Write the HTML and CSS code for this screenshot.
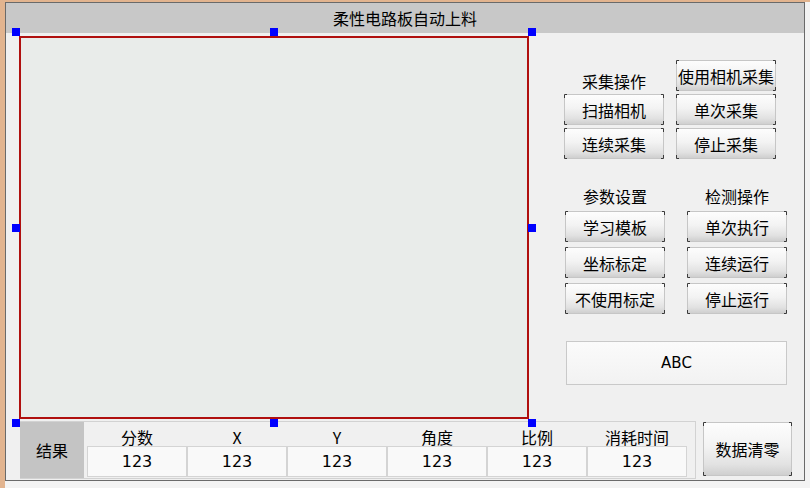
FILE: index.html
```html
<!DOCTYPE html>
<html lang="zh">
<head>
<meta charset="UTF-8">
<title>柔性电路板自动上料</title>
<link rel="stylesheet" href="styles.css">
</head>
<body>

<div class="screen">
<div class="window">

    <div class="titlebar">柔性电路板自动上料</div>

    <div class="workarea">
        <div class="viewport">
            <span class="handle h-tl"></span>
            <span class="handle h-tm"></span>
            <span class="handle h-tr"></span>
            <span class="handle h-ml"></span>
            <span class="handle h-mr"></span>
            <span class="handle h-bl"></span>
            <span class="handle h-bm"></span>
            <span class="handle h-br"></span>
        </div>

        <div class="panel">
            <div class="group group-acq">
                <div class="label">采集操作</div>
                <button class="btn">使用相机采集</button>
                <button class="btn">扫描相机</button>
                <button class="btn">单次采集</button>
                <button class="btn">连续采集</button>
                <button class="btn">停止采集</button>
            </div>

            <div class="group group-det">
                <div class="label">参数设置</div>
                <div class="label">检测操作</div>
                <button class="btn">学习模板</button>
                <button class="btn">单次执行</button>
                <button class="btn">坐标标定</button>
                <button class="btn">连续运行</button>
                <button class="btn">不使用标定</button>
                <button class="btn">停止运行</button>
            </div>

            <div class="readout">ABC</div>
        </div>
    </div>

    <div class="bottombar">
        <div class="results">
            <div class="results-title">结果</div>
            <div class="results-grid">
                <div class="col"><div class="col-name">分数</div><div class="col-value">123</div></div>
                <div class="col"><div class="col-name">X</div><div class="col-value">123</div></div>
                <div class="col"><div class="col-name">Y</div><div class="col-value">123</div></div>
                <div class="col"><div class="col-name">角度</div><div class="col-value">123</div></div>
                <div class="col"><div class="col-name">比例</div><div class="col-value">123</div></div>
                <div class="col"><div class="col-name">消耗时间</div><div class="col-value">123</div></div>
            </div>
        </div>
        <button class="btn btn-clear">数据清零</button>
    </div>

</div>
</div>

</body>
</html>
```

FILE: styles.css
```css
body{
    margin:0;
    background:#f3f3f3;
    font-family:"Noto Sans CJK SC", "DejaVu Sans", sans-serif;
    color:#000;
}

.screen{
    border-top:2px solid #e2b48f;
    border-left:5px solid #e2b48f;
    height:486px;
}

.window{
    width:798px;
    height:477px;
    border:1px solid #6a6a6a;
    background:#f0f0f0;
    display:flex;
    flex-direction:column;
}

.titlebar{
    height:30px;
    line-height:30px;
    background:#c8c8c8;
    text-align:center;
    font-size:16px;
}

.workarea{
    height:388px;
    display:flex;
}

/* image view with selection handles */
.viewport{
    position:relative;
    box-sizing:border-box;
    width:510px;
    height:383px;
    margin:3px 0 0 13px;
    border:2px solid #b0100f;
    background:#e9ecea;
}

.handle{
    position:absolute;
    width:8px;
    height:8px;
    background:#0000ff;
}
.h-tl{ left:-9px; top:-10px; }
.h-tm{ left:calc(50% - 4px); top:-10px; }
.h-tr{ right:-9px; top:-10px; }
.h-ml{ left:-9px; top:calc(50% - 4px); }
.h-mr{ right:-9px; top:calc(50% - 4px); }
.h-bl{ left:-9px; bottom:-10px; }
.h-bm{ left:calc(50% - 4px); bottom:-10px; }
.h-br{ right:-9px; bottom:-10px; }

.panel{
    margin-left:35px;
    padding-top:27px;
    display:flex;
    flex-direction:column;
}

.group{
    display:grid;
    grid-template-columns:100px 100px;
}

.group-acq{
    column-gap:12px;
    row-gap:3px;
    grid-auto-rows:31px;
}

.group-det{
    margin:28px 0 0 1px;
    column-gap:22px;
    row-gap:5px;
    grid-template-rows:19px;
    grid-auto-rows:31px;
}

.label{
    font-size:16px;
    line-height:20px;
    text-align:center;
    align-self:end;
}

.group-det .label{
    line-height:19px;
}

.btn{
    box-sizing:border-box;
    font-family:"Noto Sans CJK SC", sans-serif;
    font-size:16px;
    color:#000;
    padding:0;
    border:1px solid transparent;
    border-radius:1px;
    background:
        linear-gradient(#3a3a3a,#3a3a3a) left top / 1px 4px no-repeat border-box,
        linear-gradient(#3a3a3a,#3a3a3a) right top / 1px 4px no-repeat border-box,
        linear-gradient(#3a3a3a,#3a3a3a) left bottom / 1px 4px no-repeat border-box,
        linear-gradient(#3a3a3a,#3a3a3a) right bottom / 1px 4px no-repeat border-box,
        linear-gradient(#3a3a3a,#3a3a3a) left top / 3px 1px no-repeat border-box,
        linear-gradient(#3a3a3a,#3a3a3a) right top / 3px 1px no-repeat border-box,
        linear-gradient(#3a3a3a,#3a3a3a) left bottom / 3px 1px no-repeat border-box,
        linear-gradient(#3a3a3a,#3a3a3a) right bottom / 3px 1px no-repeat border-box,
        linear-gradient(#fdfdfd, #f3f3f3 45%, #e2e2e2 80%, #cfcfcf) padding-box,
        linear-gradient(#c6c6c6,#c6c6c6) border-box;
}

.readout{
    box-sizing:border-box;
    width:221px;
    height:44px;
    margin:27px 0 0 2px;
    border:1px solid #c9c9c9;
    background:linear-gradient(#fbfbfb, #f2f2f2);
    font-family:"DejaVu Sans", sans-serif;
    font-size:15px;
    display:flex;
    align-items:center;
    justify-content:center;
}

.bottombar{
    height:59px;
    display:flex;
    padding-left:14px;
}

.results{
    box-sizing:border-box;
    width:676px;
    height:58px;
    display:flex;
    border:1px solid #d2d2d2;
    border-left:none;
}

.results-title{
    width:64px;
    background:#c4c4c4;
    font-size:16px;
    display:flex;
    align-items:center;
    justify-content:center;
}

.results-grid{
    display:flex;
    padding-left:3px;
}

.col{
    width:100px;
    display:flex;
    flex-direction:column;
}

.col-name{
    height:24px;
    line-height:30px;
    font-size:16px;
    text-align:center;
}

.col-value{
    box-sizing:border-box;
    height:31px;
    line-height:29px;
    border:1px solid #d4d4d4;
    background:#f9f9f9;
    font-family:"DejaVu Sans", sans-serif;
    font-size:16px;
    text-align:center;
}

.btn-clear{
    width:89px;
    height:54px;
    margin:1px 0 0 7px;
    font-size:16px;
}
```
